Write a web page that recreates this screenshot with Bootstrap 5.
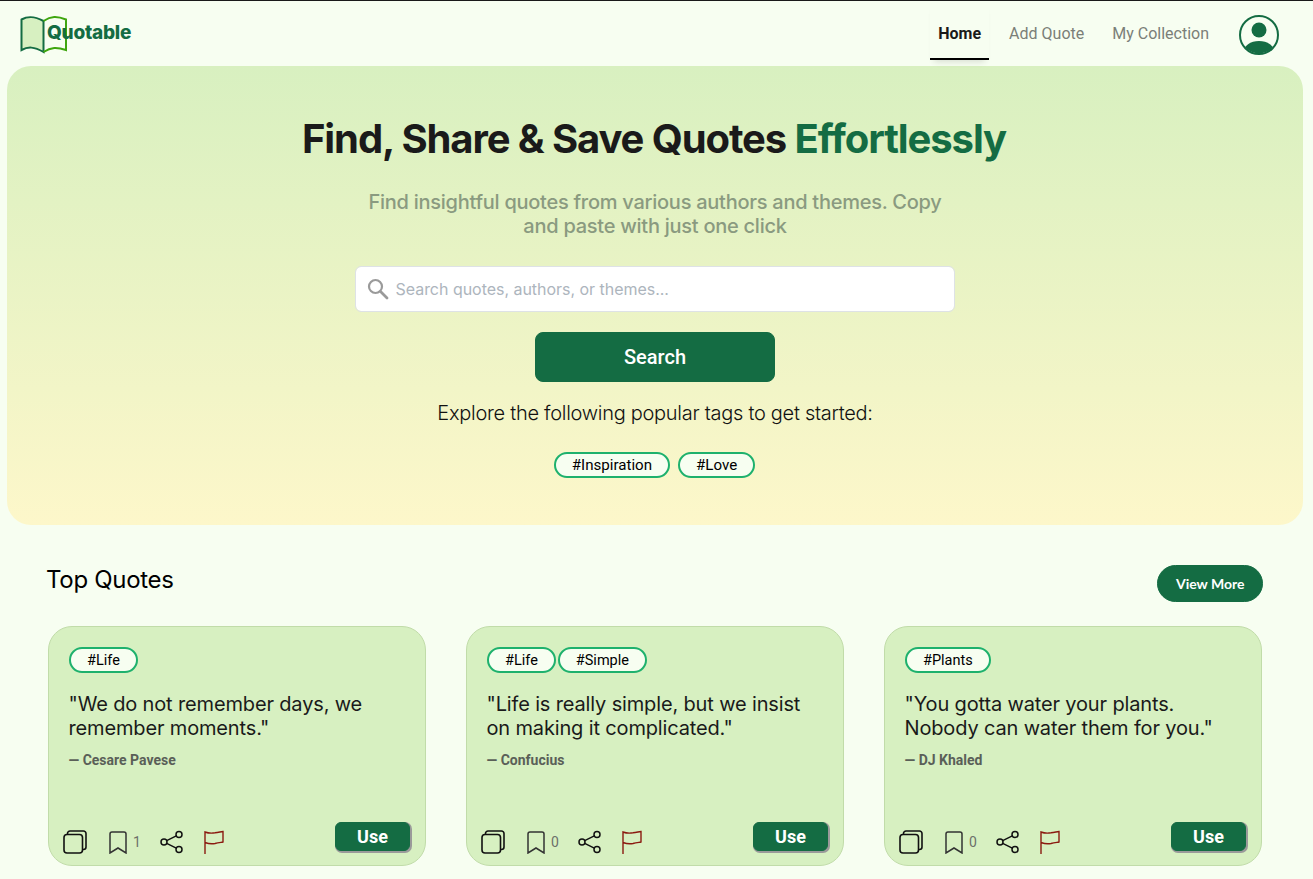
<!DOCTYPE html>
<html lang="en">
<head>
    <meta charset="UTF-8">
    <meta name="viewport" content="width=device-width, initial-scale=1.0">
    <title>Quotable</title>
    <link href="https://cdn.jsdelivr.net/npm/bootstrap@5.3.0/dist/css/bootstrap.min.css" rel="stylesheet">
    <style>
        body {
            background-color: #f7fef1;
            font-family: "Inter", sans-serif;
            color: #1a1a1a;
            border-top: 1px solid #1a1a1a;
            overflow: hidden;
        }
        .top-bar {
            height: 65px;
            padding: 0 34px 0 20px;
        }
        .logo-box {
            position: relative;
            width: 112px;
            height: 40px;
            margin-top: 14px;
        }
        .logo-text {
            position: absolute;
            left: 27px;
            top: 1px;
            font: 800 19px/34px "Inter", sans-serif;
            letter-spacing: -0.25px;
            color: #146c43;
        }
        .menu-link {
            display: block;
            font: 400 16px/24px "Roboto", sans-serif;
            color: #7b7f78;
            text-decoration: none;
            padding: 21px 0 12px;
        }
        .menu-link.current {
            font-weight: 700;
            color: #1a1a1a;
            padding-left: 8px;
            padding-right: 8px;
            border-bottom: 2px solid #000;
            box-shadow: 0 6px 6px -4px rgba(0, 0, 0, .12);
        }
        .avatar-icon {
            margin: 14px 0 0 30px;
        }
        .hero-panel {
            height: 459px;
            margin: 0 10px 0 7px;
            padding-top: 47px;
            border-radius: 24px;
            background: linear-gradient(180deg, #d8f0c0 0%, #fdf7ca 100%);
        }
        .hero-title {
            font: 700 40px/52px "Inter", sans-serif;
            letter-spacing: -1.1px;
            margin: 0 0 25px -2px;
        }
        .hero-title span {
            color: #146c43;
        }
        .hero-sub {
            width: 600px;
            font: 500 20px/24px "Inter", sans-serif;
            letter-spacing: -0.26px;
            color: #8a9a80;
            margin-bottom: 28px;
        }
        .search-box {
            position: relative;
            width: 600px;
        }
        .search-box svg {
            position: absolute;
            left: 12px;
            top: 12px;
        }
        .search-box .form-control {
            height: 46px;
            padding-left: 39.5px;
            font: 400 16px/24px "Inter", sans-serif;
            letter-spacing: -0.03px;
            border-color: #dee2e6;
            border-radius: 6px;
        }
        .search-box .form-control::placeholder {
            color: #adb5bd;
        }
        .search-btn {
            width: 240px;
            height: 50px;
            margin-top: 20px;
            font: 500 20px/24px "Roboto", sans-serif;
            background-color: #146c43;
            border-color: #146c43;
            border-radius: 8px;
        }
        .tags-intro {
            font: 300 20px/24px "Inter", sans-serif;
            letter-spacing: -0.28px;
            color: #111;
            margin: 19px 0 0;
        }
        .hero-tags {
            margin: 27px 0 0 -1px;
        }
        .tag-pill {
            display: inline-block;
            font: 400 15.1px/20px "Roboto", sans-serif;
            color: #000;
            background-color: #f7fef1;
            border: 2px solid #1eb16d;
            border-radius: 13px;
            padding: 1px 16px;
        }
        .tag-small {
            font-size: 14.5px;
            padding: 2px 16px 0;
        }
        .top-section {
            padding: 40px 50px 0 47px;
        }
        .section-title {
            font: 400 24px/30px "Inter", sans-serif;
            letter-spacing: -0.3px;
            color: #000;
            margin: -8px 0 0 -1px;
        }
        .more-btn {
            font: 700 14px/21px "Lato", sans-serif;
            color: #fff;
            background-color: #146c43;
            border-color: #146c43;
            border-radius: 19px;
            padding: 7px 17.5px;
        }
        .quote-grid {
            display: grid;
            grid-template-columns: repeat(3, 378px);
            column-gap: 40px;
            margin-top: 24px;
            margin-left: 1px;
        }
        .quote-item {
            height: 240px;
            padding: 20px;
            background-color: #d7f0c1;
            border: 1px solid #c1dca9;
            border-radius: 24px;
        }
        .quote-text {
            font: 400 20px/24px "Inter", sans-serif;
            letter-spacing: -0.15px;
            color: #1a1a1a;
            margin: 19px 0 0 -0.5px;
        }
        .quote-by {
            font: 700 14px/20px "Roboto", sans-serif;
            color: #5a5f58;
            margin: 10px 0 0 -0.5px;
        }
        .quote-tools {
            position: absolute;
            left: 14px;
            right: 15px;
            bottom: 10px;
        }
        .use-btn {
            width: 75px;
            height: 29px;
            padding: 0;
            margin-bottom: 4px;
            font: 700 18px/27px "Roboto", sans-serif;
            color: #fff;
            background-color: #146c43;
            border: 1px solid #146c43;
            border-radius: 6px;
            box-shadow: 1px 1px 0 1px #9a9a9a;
        }
        .save-count {
            margin-left: 6px;
            font: 400 14px/20px "Roboto", sans-serif;
            color: #6c706a;
        }
        .tool-mark {
            margin-left: 22px;
        }
        .tool-share {
            margin-left: 19px;
        }
        .tool-flag {
            margin-left: 20px;
        }
    </style>
</head>
<body>
    <nav class="top-bar d-flex align-items-start justify-content-between">
        <div class="logo-box">
            <svg width="48" height="40" viewBox="0 0 48 40" fill="none">
                <path d="M1.5 4.5 C8 1 14 1 23.5 6 V37 C14 31.5 8 31.5 1.5 35 Z" fill="#d7f0c1" stroke="#146c43" stroke-width="2"/>
                <path d="M23.5 6 C31 1 37 1 46 4.5 V35 C37 32 31 32 23.5 37" stroke="#3fa60f" stroke-width="2"/>
            </svg>
            <span class="logo-text">Quotable</span>
        </div>
        <div class="d-flex align-items-start">
            <a class="menu-link current" href="#">Home</a>
            <a class="menu-link ms-3 ps-1" href="#">Add Quote</a>
            <a class="menu-link ms-4 ps-1" href="#">My Collection</a>
            <svg class="avatar-icon" width="40" height="40" viewBox="0 0 40 40">
                <defs><clipPath id="avatarClip"><circle cx="20" cy="20" r="18.5"/></clipPath></defs>
                <circle cx="20" cy="20" r="19" fill="none" stroke="#146c43" stroke-width="2"/>
                <circle cx="20" cy="15" r="7.5" fill="#146c43"/>
                <ellipse cx="20" cy="37" rx="15.5" ry="11" fill="#146c43" clip-path="url(#avatarClip)"/>
            </svg>
        </div>
    </nav>

    <section class="hero-panel d-flex flex-column align-items-center text-center">
        <h1 class="hero-title">Find, Share &amp; Save Quotes <span>Effortlessly</span></h1>
        <p class="hero-sub">Find insightful quotes from various authors and themes. Copy and paste with just one click</p>
        <div class="search-box">
            <svg width="22" height="22" viewBox="0 0 22 22" fill="none" stroke="#9a9a9a" stroke-width="2.2">
                <circle cx="8.5" cy="8.5" r="6.5"/>
                <path d="M13.5 13.5 L20 20" stroke-linecap="round" stroke-width="2.8"/>
            </svg>
            <input class="form-control" type="text" placeholder="Search quotes, authors, or themes...">
        </div>
        <button class="btn btn-primary search-btn" type="button">Search</button>
        <p class="tags-intro">Explore the following popular tags to get started:</p>
        <div class="hero-tags d-flex gap-2">
            <span class="tag-pill">#Inspiration</span>
            <span class="tag-pill">#Love</span>
        </div>
    </section>

    <section class="top-section">
        <div class="d-flex align-items-center justify-content-between">
            <h2 class="section-title">Top Quotes</h2>
            <button class="btn more-btn" type="button">View More</button>
        </div>
        <div class="quote-grid" id="quoteGrid"></div>
    </section>

    <script src="https://cdn.jsdelivr.net/npm/bootstrap@5.3.0/dist/js/bootstrap.bundle.min.js"></script>
    <script>
        const quotes = [
            { tags: ['#Life'], text: '"We do not remember days, we remember moments."', by: 'Cesare Pavese', saves: 1 },
            { tags: ['#Life', '#Simple'], text: '"Life is really simple, but we insist on making it complicated."', by: 'Confucius', saves: 0 },
            { tags: ['#Plants'], text: '"You gotta water your plants. Nobody can water them for you."', by: 'DJ Khaled', saves: 0 }
        ];

        document.getElementById('quoteGrid').innerHTML = quotes.map(q => `
            <article class="quote-item position-relative">
                <div class="d-flex" style="gap:2px">${q.tags.map(t => `<span class="tag-pill tag-small">${t}</span>`).join('')}</div>
                <p class="quote-text">${q.text}</p>
                <p class="quote-by">— ${q.by}</p>
                <div class="quote-tools d-flex align-items-end justify-content-between">
                    <div class="d-flex align-items-center" style="height:26px">
                        <svg width="24" height="24" viewBox="0 0 24 24" fill="none" stroke="#111" stroke-width="1.6">
                            <rect x="1" y="4.5" width="18.5" height="18.5" rx="3"/>
                            <path d="M4.5 4.5 V3.5 a2.5 2.5 0 0 1 2.5 -2.5 H20.5 a2.5 2.5 0 0 1 2.5 2.5 V17 a2.5 2.5 0 0 1 -2.5 2.5 H19.5"/>
                        </svg>
                        <svg class="tool-mark" width="18" height="23" viewBox="0 0 18 23" fill="none" stroke="#333" stroke-width="1.5">
                            <path d="M1 3 a2 2 0 0 1 2 -2 H15 a2 2 0 0 1 2 2 V22 L9 17 L1 22 Z"/>
                        </svg>
                        <span class="save-count">${q.saves}</span>
                        <svg class="tool-share" width="24" height="24" viewBox="0 0 24 24" fill="none" stroke="#111" stroke-width="1.5">
                            <circle cx="19" cy="4.5" r="3"/><circle cx="4" cy="12" r="3"/><circle cx="19" cy="19.5" r="3"/>
                            <path d="M6.7 10.6 L16.3 5.9 M6.7 13.4 L16.3 18.1"/>
                        </svg>
                        <svg class="tool-flag" width="20" height="24" viewBox="0 0 20 24" fill="none" stroke="#8b1a10" stroke-width="1.4">
                            <path d="M1 24 V2 C5 3.5 7 3.5 11 2.8 C14 2.2 16 2 19 1.5 V12 C16 12.5 14 12.7 11 13.5 C7 14.3 5 14 1 12.5"/>
                        </svg>
                    </div>
                    <button class="btn use-btn" type="button">Use</button>
                </div>
            </article>`).join('');
    </script>
</body>
</html>
